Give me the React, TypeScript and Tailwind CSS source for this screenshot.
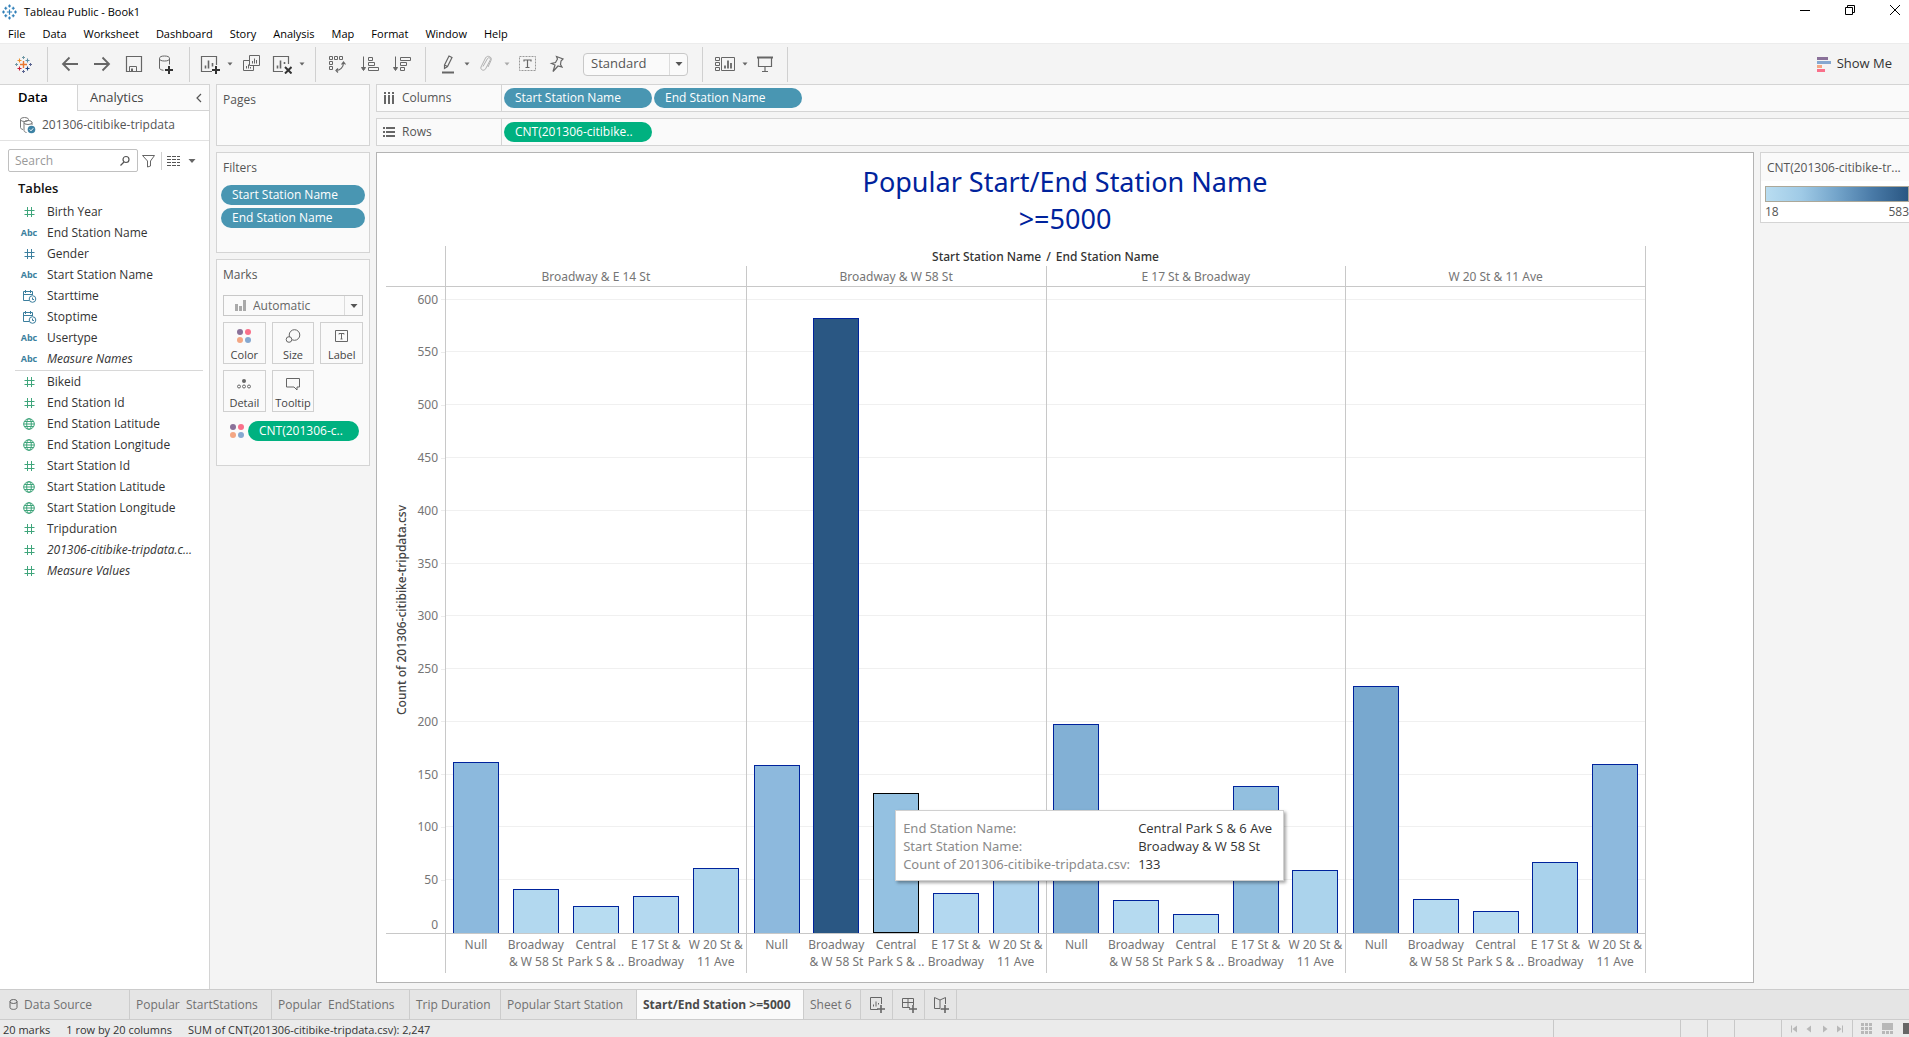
import React from 'react';

const UI = "font-['Open_Sans','Noto_Sans',sans-serif]";

/* ---------- data ---------- */

const MENUS = ['File', 'Data', 'Worksheet', 'Dashboard', 'Story', 'Analysis', 'Map', 'Format', 'Window', 'Help'];

type Kind = 'num' | 'abc' | 'date' | 'geo';
type Field = { name: string; kind: Kind; green?: boolean; italic?: boolean };

const DIMENSIONS: Field[] = [
  { name: 'Birth Year', kind: 'num', green: true },
  { name: 'End Station Name', kind: 'abc' },
  { name: 'Gender', kind: 'num' },
  { name: 'Start Station Name', kind: 'abc' },
  { name: 'Starttime', kind: 'date' },
  { name: 'Stoptime', kind: 'date' },
  { name: 'Usertype', kind: 'abc' },
  { name: 'Measure Names', kind: 'abc', italic: true },
];

const MEASURES: Field[] = [
  { name: 'Bikeid', kind: 'num', green: true },
  { name: 'End Station Id', kind: 'num', green: true },
  { name: 'End Station Latitude', kind: 'geo', green: true },
  { name: 'End Station Longitude', kind: 'geo', green: true },
  { name: 'Start Station Id', kind: 'num', green: true },
  { name: 'Start Station Latitude', kind: 'geo', green: true },
  { name: 'Start Station Longitude', kind: 'geo', green: true },
  { name: 'Tripduration', kind: 'num', green: true },
  { name: '201306-citibike-tripdata.c...', kind: 'num', green: true, italic: true },
  { name: 'Measure Values', kind: 'num', green: true, italic: true },
];

const END_STATIONS = [
  ['Null'],
  ['Broadway', '& W 58 St'],
  ['Central', 'Park S & ..'],
  ['E 17 St &', 'Broadway'],
  ['W 20 St &', '11 Ave'],
];

type Bar = { value: number; fill: string; hovered?: boolean };
const PANES: { name: string; bars: Bar[] }[] = [
  {
    name: 'Broadway & E 14 St',
    bars: [
      { value: 162, fill: '#8cb9dd' },
      { value: 42, fill: '#b2d8ef' },
      { value: 26, fill: '#b7dcf1' },
      { value: 35, fill: '#b4d9f0' },
      { value: 62, fill: '#abd3ec' },
    ],
  },
  {
    name: 'Broadway & W 58 St',
    bars: [
      { value: 159, fill: '#8db9dd' },
      { value: 583, fill: '#2a5783' },
      { value: 133, fill: '#94c1e1', hovered: true },
      { value: 38, fill: '#b3d8f0' },
      { value: 54, fill: '#aed4ee' },
    ],
  },
  {
    name: 'E 17 St & Broadway',
    bars: [
      { value: 198, fill: '#82b0d5' },
      { value: 31, fill: '#b5daf0' },
      { value: 18, fill: '#b9ddf1' },
      { value: 139, fill: '#92bfdf' },
      { value: 60, fill: '#abd3ec' },
    ],
  },
  {
    name: 'W 20 St & 11 Ave',
    bars: [
      { value: 234, fill: '#78a8cf' },
      { value: 32, fill: '#b5daf0' },
      { value: 21, fill: '#b8dcf1' },
      { value: 67, fill: '#a9d2ec' },
      { value: 160, fill: '#8db9dd' },
    ],
  },
];

const AXIS_MAX = 612;
const TICKS = [600, 550, 500, 450, 400, 350, 300, 250, 200, 150, 100, 50];
const pct = (v: number) => `${(v / AXIS_MAX) * 100}%`;

/* ---------- icons ---------- */

function Ico({ children, w = 20, label }: { children: React.ReactNode; w?: number; label?: string }) {
  return (
    <svg width={w} height="20" viewBox={`0 0 ${w} 20`} fill="none" stroke="#666" strokeWidth="1" aria-label={label} className="shrink-0">
      {children}
    </svg>
  );
}

function ToolButton({ label, children, w }: { label: string; children: React.ReactNode; w?: number }) {
  return (
    <button type="button" aria-label={label} className="flex shrink-0 items-center">
      <Ico w={w}>{children}</Ico>
    </button>
  );
}

function Caret({ className = 'fill-[#666]' }: { className?: string }) {
  return (
    <svg width="8" height="8" viewBox="0 0 8 8" className={`shrink-0 ${className}`}>
      <path d="M1.5 2.5h5L4 5.5z" />
    </svg>
  );
}

function MenuCaret({ label, dim }: { label: string; dim?: boolean }) {
  return (
    <button type="button" aria-label={label} className="flex items-center">
      <Caret className={dim ? 'fill-[#aaa]' : 'fill-[#666]'} />
    </button>
  );
}

const cross = (x: number, y: number, r: number) => `M${x - r} ${y}h${2 * r}M${x} ${y - r}v${2 * r}`;

function Logo() {
  return (
    <Ico label="Tableau">
      <path d={cross(9.5, 10.5, 3.5)} stroke="#e8762d" strokeWidth="1.4" />
      <path d={cross(5.5, 6.5, 2)} stroke="#eb912c" strokeWidth="1.1" />
      <path d={cross(13.5, 6.5, 2)} stroke="#5a8fa8" strokeWidth="1.1" />
      <path d={cross(5.5, 14.5, 2)} stroke="#c72037" strokeWidth="1.1" />
      <path d={cross(13.5, 14.5, 2)} stroke="#1f447e" strokeWidth="1.1" />
      <path d={cross(9.5, 3.5, 1.5) + cross(2.5, 10.5, 1.5)} stroke="#7199a6" />
      <path d={cross(16.5, 10.5, 1.5) + cross(9.5, 17.5, 1.5)} stroke="#5c6692" />
    </Ico>
  );
}

function TitleLogo() {
  return (
    <svg width="15" height="16" viewBox="0 0 20 20" fill="none" stroke="#2f7fb8" strokeWidth="1.6">
      <path d={cross(10, 10, 3.5) + cross(5, 5, 2) + cross(15, 5, 2) + cross(5, 15, 2) + cross(15, 15, 2)} />
      <path d={cross(10, 2, 2) + cross(2, 10, 2) + cross(18, 10, 2) + cross(10, 18, 2)} />
    </svg>
  );
}

function ColorDots() {
  return (
    <svg width="14" height="14" viewBox="0 0 14 14" className="shrink-0">
      <circle cx="3" cy="3" r="3" fill="#8a7199" />
      <circle cx="11" cy="3" r="3" fill="#f9708a" />
      <circle cx="3" cy="11" r="3" fill="#f3a683" />
      <circle cx="11" cy="11" r="3" fill="#85a8d0" />
    </svg>
  );
}

function FieldIcon({ kind, green }: { kind: Kind; green?: boolean }) {
  const color = green ? '#3fa57b' : '#3c7f9e';
  if (kind === 'abc') return <span className="text-[9px] font-bold text-[#3c7f9e]">Abc</span>;
  return (
    <svg width="16" height="14" viewBox="0 0 16 14" fill="none" stroke={color} strokeWidth="1">
      {kind === 'num' && <path d="M6.5 2v10M10.5 2v10M3.5 5.5h10M3.5 9.5h10" />}
      {kind === 'date' && (
        <>
          <path d="M8 11.5H2.500v-9h9V6M2.500 5.500h9M4.500 1v3M9.500 1v3" />
          <circle cx="11.500" cy="10" r="3.300" />
          <path d="M11.500 8.500V10.500h1.500" />
        </>
      )}
      {kind === 'geo' && (
        <>
          <circle cx="8" cy="7" r="5.300" />
          <ellipse cx="8" cy="7" rx="2.300" ry="5.300" />
          <path d="M3.500 4.500h9M3.500 9.500h9M2.500 7h11" />
        </>
      )}
    </svg>
  );
}

/* ---------- shared pieces ---------- */

function Pill({ children, green, className = '' }: { children: React.ReactNode; green?: boolean; className?: string }) {
  return (
    <button
      type="button"
      className={`flex h-5 items-center overflow-hidden rounded-full pl-[11px] text-left text-xs font-medium whitespace-nowrap text-white ${
        green ? 'bg-[#00b180]' : 'bg-[#4996b2]'
      } ${className}`}
    >
      {children}
    </button>
  );
}

function Combo({ label, value, className, selectClass }: { label: string; value: string; className: string; selectClass: string }) {
  return (
    <span className={`relative flex items-stretch border border-[#c8c8c8] bg-[#fafafa] ${className}`}>
      <select aria-label={label} defaultValue={value} className={`w-full appearance-none bg-transparent outline-none ${selectClass}`}>
        <option>{value}</option>
      </select>
      <span className="pointer-events-none absolute inset-y-0 right-0 flex w-[18px] items-center justify-center border-l border-[#dcdcdc]">
        <svg width="8" height="6" viewBox="0 0 8 6" fill="#555">
          <path d="M0.500 1h7L4 5z" />
        </svg>
      </span>
    </span>
  );
}

function Card({ title, className, children }: { title: string; className: string; children?: React.ReactNode }) {
  return (
    <section className={`border border-[#d4d4d4] bg-[#fafafa] ${className}`}>
      <h2 className="px-1.5 pt-[7px] text-xs leading-4 text-[#555]">{title}</h2>
      {children}
    </section>
  );
}

/* ---------- chrome ---------- */

function TitleBar() {
  return (
    <header className="bg-white text-[11px] text-black">
      <div className="flex h-6 items-center gap-[7px] pl-0.5">
        <TitleLogo />
        <span>Tableau Public - Book1</span>
        <div className="mb-1 ml-auto flex items-center gap-[33px] pr-2">
          <button type="button" aria-label="Minimize">
            <svg width="12" height="12" viewBox="0 0 12 12" stroke="#000"><path d="M1 6.500h10" /></svg>
          </button>
          <button type="button" aria-label="Restore">
            <svg width="12" height="12" viewBox="0 0 12 12" stroke="#000" fill="none"><path d="M1.500 3.500h7v7h-7zM3.500 3.500v-2h7v7h-2" /></svg>
          </button>
          <button type="button" aria-label="Close">
            <svg width="12" height="12" viewBox="0 0 12 12" stroke="#000"><path d="M1 1l10 10M11 1L1 11" /></svg>
          </button>
        </div>
      </div>
      <nav className="flex h-[19px] items-center gap-[17px] pt-0.5 pl-2">
        {MENUS.map((m) => (
          <button type="button" key={m}>{m}</button>
        ))}
      </nav>
    </header>
  );
}

const Sep = () => <span className="h-[35px] w-px shrink-0 bg-[#d0d0d0]" />;

function Toolbar() {
  return (
    <div className="flex h-[41px] shrink-0 items-center border-t border-[#ececec] bg-[#f4f4f4]">
      <div className="flex pr-[13px] pl-3.5"><Logo /></div>
      <Sep />
      <div className="flex gap-3 pr-[13px] pl-3">
        <ToolButton label="Undo"><path d="M3 10h15M9.500 3.500L3 10l6.500 6.500" strokeWidth="1.800" /></ToolButton>
        <ToolButton label="Redo"><path d="M2 10h15M10.500 3.500L17 10l-6.500 6.500" strokeWidth="1.800" /></ToolButton>
        <ToolButton label="Save">
          <path d="M2.500 2.500h15v15h-15z" strokeWidth="1.200" />
          <path d="M5.500 17v-4.500h7V17" />
          <path d="M8 14.500v2.500" strokeWidth="2" />
        </ToolButton>
        <ToolButton label="New Data Source">
          <ellipse cx="8.500" cy="4.500" rx="5" ry="2.500" />
          <path d="M3.500 4.500v9.500c0 1.200 1.500 2 4 2.300M13.500 4.500v6" />
          <path d="M13 12v8M9 16h8" strokeWidth="2" stroke="#333" />
        </ToolButton>
      </div>
      <Sep />
      <div className="flex items-center gap-[9px] pr-[9px] pl-2.5">
        <span className="flex items-center gap-1.5">
          <ToolButton label="New Worksheet">
            <path d="M12 17.500H1.500v-15h15V11" strokeWidth="1.200" />
            <path d="M5.500 14.500v-3M8.500 14.500v-8M12.500 12.500V9" strokeWidth="1.600" />
            <path d="M16 12v8M12 16h8" strokeWidth="2" stroke="#333" />
          </ToolButton>
          <MenuCaret label="New Worksheet options" />
        </span>
        <ToolButton label="Duplicate">
          <path d="M6.500 1.500h10v10h-10zM6 6.500H.5v10h10V12" />
          <path d="M9.500 9.500V7M11.500 9.500V4.500M13.500 9.500V6M3.500 14.500v-2.500M5.500 14.500v-4M7.500 14.500v-1.500" />
        </ToolButton>
        <span className="flex items-center gap-1.5">
          <ToolButton label="Clear Sheet">
            <path d="M11 17.500H1.500v-15h15V10" strokeWidth="1.200" />
            <path d="M5.500 14.500v-3M8.500 14.500v-8M12.500 10V8" strokeWidth="1.600" />
            <path d="M13 13l6.500 6.500M19.500 13L13 19.500" strokeWidth="2" stroke="#333" />
          </ToolButton>
          <MenuCaret label="Clear Sheet options" />
        </span>
      </div>
      <Sep />
      <div className="flex gap-3 pr-[13px] pl-3">
        <ToolButton label="Swap Rows and Columns">
          <path d="M1.500 2.500h3v3h-3zM6.500 2.500h3v3h-3zM11.500 2.500h3v3h-3zM1.500 7.500h3v3h-3zM1.500 12.500h3v3h-3z" />
          <path d="M8 16.500c4 0 7.500-3 7.500-8M13.500 10.500l2-2.500 2 2.500M10 14.500l-2 2 2 2" strokeWidth="1.200" />
        </ToolButton>
        <ToolButton label="Sort Ascending">
          <path d="M3.500 2.500v13M1.500 13.500h4l-2 3z" fill="#666" />
          <path d="M8.500 3.500h4v3h-4zM8.500 8.500h6v3h-6zM8.500 13.500h10v3h-10z" />
        </ToolButton>
        <ToolButton label="Sort Descending">
          <path d="M3.500 2.500v13M1.500 13.500h4l-2 3z" fill="#666" />
          <path d="M8.500 3.500h10v3h-10zM8.500 8.500h6v3h-6zM8.500 13.500h4v3h-4z" />
        </ToolButton>
      </div>
      <Sep />
      <div className="flex items-center gap-2 pr-3.5 pl-[13px]">
        <span className="flex items-center gap-1">
          <ToolButton label="Highlight">
            <path d="M5.500 11l4.500-9 3 1.500L8.500 12.500l-3 2zM5.500 11l3 1.500" strokeWidth="1.200" />
            <path d="M3 18.500h12" strokeWidth="2" />
          </ToolButton>
          <MenuCaret label="Highlight options" />
        </span>
        <span className="flex items-center gap-1">
          <ToolButton label="Group Members">
            <path d="M4 12.500l4.500-8c1.200-1.600 3.500-.5 2.800 1.400L6.500 15c-1.600 2.500-5.500.8-4.500-2L6.500 4c1.800-3.300 7-1.400 5.500 2.500L9 13" stroke="#b0b0b0" />
          </ToolButton>
          <MenuCaret label="Group options" dim />
        </span>
        <ToolButton label="Show Mark Labels">
          <path d="M.5 2.500h16v14H.5z" stroke="#999" strokeDasharray="2 1" />
          <path d="M5 7.500V6h7v1.500M8.500 6v8M6.500 13.500h4" strokeWidth="1.200" />
        </ToolButton>
        <ToolButton label="Fix Axes">
          <path d="M9.500 2.500l6.500 2.500-2 2-.5 3.500 1.500 2.500-4-1-5 5.500 2-6.500-3.500-1.500 4-1 2-3.500z" strokeWidth="1.200" />
        </ToolButton>
        <Combo label="Fit" value="Standard" className="ml-2 h-[23px] w-[105px] rounded-sm" selectClass="pl-[7px] text-[13px] text-[#555]" />
      </div>
      <Sep />
      <div className="flex items-center gap-2 pr-2.5 pl-3">
        <span className="flex items-center gap-1">
          <ToolButton label="Show Cards" w={22}>
            <path d="M.5 3.500h4v3h-4zM.5 8.500h4v3h-4zM.5 13.500h4v3h-4zM6.500 3.500h13v13h-13z" />
            <path d="M10 14.500v-3M13 14.500v-8M16 14.500V9" strokeWidth="1.800" />
          </ToolButton>
          <MenuCaret label="Show Cards options" />
        </span>
        <ToolButton label="Presentation Mode">
          <path d="M0 3.500h16" strokeWidth="2" />
          <path d="M1.500 4v8.500h13V4M8 12.500v5M5 17.500h6" strokeWidth="1.200" />
        </ToolButton>
      </div>
      <Sep />
      <button type="button" className="ml-auto flex items-center gap-1.5 pr-[17px] text-[13px] text-[#333]">
        <svg width="14" height="15" viewBox="0 0 14 15">
          <path d="M0 0h11v3H0z" fill="#8a7199" />
          <path d="M0 4h14v3H0z" fill="#85a8d0" />
          <path d="M0 8h5v3H0z" fill="#f3a683" />
          <path d="M0 12h8v3H0z" fill="#f9708a" />
        </svg>
        Show Me
      </button>
    </div>
  );
}

/* ---------- data pane ---------- */

function FieldList({ fields }: { fields: Field[] }) {
  return (
    <ul>
      {fields.map((f) => (
        <li key={f.name} className="flex h-[21px] items-center gap-1">
          <span className="flex w-7 shrink-0 justify-center"><FieldIcon kind={f.kind} green={f.green} /></span>
          <span className={`whitespace-nowrap text-[#333] ${f.italic ? 'italic' : ''}`}>{f.name}</span>
        </li>
      ))}
    </ul>
  );
}

function DataPane() {
  return (
    <aside className="w-[210px] shrink-0 border-t border-r border-[#d4d4d4] bg-white text-xs">
      <div className="flex h-[26px] text-[13px]">
        <button type="button" className="w-[77px] pl-[18px] text-left font-semibold text-black">Data</button>
        <div className="flex flex-1 items-center justify-between border-b border-l border-[#d4d4d4] bg-[#fafafa] pr-[7px] pl-3">
          <button type="button" className="text-[#444]">Analytics</button>
          <button type="button" aria-label="Collapse pane">
            <svg width="6" height="10" viewBox="0 0 6 10" fill="none" stroke="#555" strokeWidth="1.200"><path d="M5 1L1 5l4 4" /></svg>
          </button>
        </div>
      </div>
      <button type="button" className="flex h-[30px] w-full items-center gap-1.5 border-b border-[#e2e2e2] pb-0.5 pl-[19px] text-[#555]">
        <svg width="17" height="18" viewBox="0 0 17 18" fill="none" stroke="#777">
          <ellipse cx="5.500" cy="3.500" rx="4" ry="2" />
          <path d="M1.500 3.500v8c0 1 1 1.700 2.500 2" />
          <ellipse cx="9" cy="6.500" rx="4" ry="2" />
          <path d="M5 6.500v8c0 1 1 1.700 2.500 2M13 6.500V9" />
          <circle cx="12.500" cy="13.500" r="3.800" fill="#3d82a4" stroke="none" />
          <path d="M10.800 13.500l1.200 1.300 2.200-2.500" stroke="#fff" />
        </svg>
        201306-citibike-tripdata
      </button>
      <div className="flex h-[39px] items-center pl-2">
        <label className="flex h-[23px] w-[130px] items-center rounded-xs border border-[#c0c0c0] pr-1.5 pl-1.5">
          <input type="text" placeholder="Search" aria-label="Search" className="w-full min-w-0 outline-none placeholder:text-[#999]" />
          <svg width="12" height="12" viewBox="0 0 12 12" fill="none" stroke="#555" strokeWidth="1.200" className="shrink-0">
            <circle cx="7" cy="4.500" r="3" />
            <path d="M5 7L1.500 10.500" />
          </svg>
        </label>
        <button type="button" aria-label="Filter fields" className="ml-[3px]">
          <svg width="15" height="14" viewBox="0 0 15 14" fill="none" stroke="#666"><path d="M1.500 1.500h12L9.500 7v5l-3 1V7z" /></svg>
        </button>
        <span className="mx-[5px] h-[18px] w-px bg-[#d0d0d0]" />
        <button type="button" aria-label="View options" className="flex items-center gap-2">
          <svg width="13" height="10" viewBox="0 0 13 10" stroke="#555" strokeWidth="1">
            <path d="M0 .5h13M0 3.500h13M0 6.500h13M0 9.500h13" strokeDasharray="4 1" />
          </svg>
          <svg width="8" height="6" viewBox="0 0 8 6" fill="#666"><path d="M.5 1h7L4 5z" /></svg>
        </button>
      </div>
      <h2 className="mb-[3px] flex h-[17px] items-center pl-[18px] text-[13px] font-semibold text-[#111]">Tables</h2>
      <div className="mr-1.5 ml-[15px] pt-px">
        <FieldList fields={DIMENSIONS} />
        <div className="mt-px border-t border-[#d8d8d8]"><FieldList fields={MEASURES} /></div>
      </div>
    </aside>
  );
}

/* ---------- cards ---------- */

function MarkButton({ label, children }: { label: string; children: React.ReactNode }) {
  return (
    <button type="button" className="flex h-[42px] flex-col items-center justify-between border border-[#d0d0d0] pt-1 text-[11px] leading-4 text-[#444]">
      <Ico>{children}</Ico>
      {label}
    </button>
  );
}

function Cards() {
  return (
    <div className="flex w-[154px] shrink-0 flex-col gap-1.5">
      <Card title="Pages" className="h-[62px]" />
      <Card title="Filters" className="h-[101px]">
        <div className="flex flex-col gap-[3px] px-1 pt-[9px]">
          <Pill>Start Station Name</Pill>
          <Pill>End Station Name</Pill>
        </div>
      </Card>
      <Card title="Marks" className="h-[207px]">
        <div className="px-1.5 pt-3">
          <div className="flex">
            <Combo label="Mark type" value="Automatic" className="h-[21px] w-full" selectClass="pl-[29px] text-xs text-[#666]" />
            <svg width="11" height="11" viewBox="0 0 11 11" fill="#aaa" className="pointer-events-none absolute mt-[5px] ml-3">
              <path d="M0 4h3v7H0zM4 6h3v5H4zM8 0h3v11H8z" />
            </svg>
          </div>
          <div className="mt-1.5 grid grid-cols-3 gap-1.5">
            <button type="button" className="flex h-[42px] flex-col items-center justify-between border border-[#d0d0d0] pt-1.5 text-[11px] leading-4 text-[#444]">
              <ColorDots />
              Color
            </button>
            <MarkButton label="Size">
              <circle cx="11.500" cy="8" r="5.300" />
              <circle cx="6" cy="12.500" r="2.800" fill="#fafafa" />
            </MarkButton>
            <MarkButton label="Label">
              <path d="M3.500 3.500h12v11h-12zM7 7.500v-1h5v1M9.500 6.500V12M8.500 12h2" />
            </MarkButton>
            <MarkButton label="Detail">
              <circle cx="10" cy="6" r="2" fill="#666" stroke="none" />
              <circle cx="5" cy="11.500" r="1.500" />
              <circle cx="10" cy="11.500" r="1.500" />
              <circle cx="15" cy="11.500" r="1.500" />
            </MarkButton>
            <MarkButton label="Tooltip">
              <path d="M3.500 3.500h13v8.500h-2.500v3l-3-3h-7.500z" />
            </MarkButton>
          </div>
          <div className="flex items-center gap-1 pt-[9px] pr-1 pl-[7px]">
            <ColorDots />
            <Pill green className="flex-1">CNT(201306-c..</Pill>
          </div>
        </div>
      </Card>
    </div>
  );
}

/* ---------- shelves ---------- */

function Shelf({ title, icon, children }: { title: string; icon: React.ReactNode; children: React.ReactNode }) {
  return (
    <div className="flex h-7 shrink-0 border border-r-0 border-[#d4d4d4] bg-[#fafafa]">
      <div className="flex w-[125px] items-center gap-[7px] border-r border-[#d4d4d4] pl-1.5 text-xs text-[#555]">
        {icon}
        {title}
      </div>
      <div className="flex items-center gap-0.5 pl-0.5">{children}</div>
    </div>
  );
}

/* ---------- chart ---------- */

function MarkTooltip() {
  return (
    <dl className="absolute bottom-[51px] left-[21px] z-10 grid w-[389px] grid-cols-[235px_1fr] border border-[#d0d0d0] bg-white pt-2 pb-[7px] pl-[7px] text-left text-[13px] leading-[18px] whitespace-nowrap shadow-[2px_2px_3px_rgba(0,0,0,0.35)]">
      <dt className="text-[#8a8a8a]">End Station Name:</dt>
      <dd className="font-['Open_Sans','Noto_Sans',sans-serif] font-medium text-[#333]">Central Park S &amp; 6 Ave</dd>
      <dt className="text-[#8a8a8a]">Start Station Name:</dt>
      <dd className="font-['Open_Sans','Noto_Sans',sans-serif] font-medium text-[#333]">Broadway &amp; W 58 St</dd>
      <dt className="text-[#8a8a8a]">Count of 201306-citibike-tripdata.csv:</dt>
      <dd className="font-['Open_Sans','Noto_Sans',sans-serif] font-medium text-[#333]">133</dd>
    </dl>
  );
}

function Chart() {
  return (
    <div className="mr-[107px] mb-[9px] ml-[9px] flex min-h-0 flex-1 text-xs text-[#757575]">
      {/* value axis */}
      <div className="flex w-[59px] shrink-0 flex-col">
        <div className="h-[41px] border-b border-[#c8c8c8]" />
        <div className="relative flex flex-1 border-b border-[#c8c8c8]">
          <div className="flex w-8 items-center justify-center">
            <span className="rotate-180 font-medium whitespace-nowrap text-[#444] [writing-mode:vertical-rl]">Count of 201306-citibike-tripdata.csv</span>
          </div>
          {TICKS.map((t) => (
            <span key={t} className="absolute right-0 flex h-4 translate-y-1/2 items-center gap-[3px]" style={{ bottom: pct(t) }}>
              {t}
              <span className="h-px w-1 bg-[#ececec]" />
            </span>
          ))}
          <span className="absolute right-[7px] bottom-0 leading-4">0</span>
        </div>
        <div className="h-[39px]" />
      </div>

      {/* panes */}
      <div className="flex min-w-0 flex-1 flex-col border-x border-[#c8c8c8]">
        <div className="flex h-5 items-center justify-center gap-[5px] pt-0.5 font-medium text-[#333]">
          <span>Start Station Name</span>
          <span>/</span>
          <span>End Station Name</span>
        </div>
        <div className="grid flex-1 grid-cols-4">
          {PANES.map((pane, i) => (
            <div key={pane.name} className={`flex flex-col ${i ? 'border-l border-[#c8c8c8]' : ''}`}>
              <div className="flex h-[21px] items-center justify-center border-b border-[#c8c8c8] pt-0.5">{pane.name}</div>
              <div className="relative grid flex-1 grid-cols-5 border-b border-[#c8c8c8]">
                {TICKS.map((t) => (
                  <span key={t} className="absolute inset-x-0 h-px bg-[#f0f0f0]" style={{ bottom: pct(t) }} />
                ))}
                {pane.bars.map((b, j) => (
                  <div key={j} className="flex items-end justify-center">
                    <div
                      className={`relative w-[46px] border ${b.hovered ? 'border-black' : 'border-b-0 border-[#00239c]'}`}
                      style={{ height: pct(b.value), backgroundColor: b.fill }}
                    >
                      {b.hovered && <MarkTooltip />}
                    </div>
                  </div>
                ))}
              </div>
              <div className="grid h-[39px] grid-cols-5 leading-[17px]">
                {END_STATIONS.map((lines, j) => (
                  <div key={j} className="flex flex-col items-center pt-0.5 whitespace-nowrap">
                    {lines.map((l) => (
                      <span key={l}>{l}</span>
                    ))}
                  </div>
                ))}
              </div>
            </div>
          ))}
        </div>
      </div>
    </div>
  );
}

function Legend() {
  return (
    <aside className="flex w-[149px] shrink-0 flex-col self-start border border-r-0 border-[#d4d4d4] bg-white text-xs text-[#555]">
      <h2 className="h-7 truncate bg-[#fafafa] pl-1.5 leading-[30px] whitespace-nowrap">CNT(201306-citibike-tr...</h2>
      <div className="pt-[5px] pl-1">
        <div className="h-4 border border-[#aca899] bg-[linear-gradient(to_right,#b9ddf1,#9fcae6,#73a4ca,#497aa7,#2a5783)]" />
        <div className="flex justify-between pt-0.5 pb-0.5 leading-4">
          <span>18</span>
          <span>583</span>
        </div>
      </div>
    </aside>
  );
}

/* ---------- bottom ---------- */

const SHEETS = [
  { name: 'Popular  StartStations', w: 'w-[142px]' },
  { name: 'Popular  EndStations', w: 'w-[138px]' },
  { name: 'Trip Duration', w: 'w-[91px]' },
  { name: 'Popular Start Station', w: 'w-[136px]' },
  { name: 'Start/End Station >=5000', w: 'w-[167px]', active: true },
  { name: 'Sheet 6', w: 'w-[57px]' },
];

function SheetTabs() {
  return (
    <nav className="flex h-[31px] shrink-0 border-y border-[#cccccc] bg-[#e5e5e5] text-xs text-[#707070]">
      <button type="button" className="flex w-[130px] items-center gap-1.5 border-r border-[#cccccc] pl-[9px]">
        <svg width="9" height="11" viewBox="0 0 9 11" fill="none" stroke="#666">
          <ellipse cx="4.500" cy="2.500" rx="3.500" ry="2" />
          <path d="M1 2.500v6c0 2.500 7 2.500 7 0v-6" />
        </svg>
        Data Source
      </button>
      {SHEETS.map((s) => (
        <button
          type="button"
          key={s.name}
          className={`border-r border-[#cccccc] pl-1.5 text-left whitespace-pre ${s.w} ${
            s.active ? 'bg-[#fafafa] font-bold text-[#4a4a4a]' : ''
          }`}
        >
          {s.name}
        </button>
      ))}
      <button type="button" aria-label="New worksheet" className="w-8 border-r border-[#cccccc] pl-2">
        <Ico>
          <path d="M9 14.500H1.500v-12h11V9M4.500 11.500v-2M7 11.500v-5M9.500 9.500V8" />
          <path d="M12 10v8M8 14h8" strokeWidth="1.600" />
        </Ico>
      </button>
      <button type="button" aria-label="New dashboard" className="w-8 border-r border-[#cccccc] pl-2">
        <Ico>
          <path d="M9 12.500H1.500v-9h11V10M7 3.500v9M1.500 7.500h11" />
          <path d="M12 10v8M8 14h8" strokeWidth="1.600" />
        </Ico>
      </button>
      <button type="button" aria-label="New story" className="w-8 border-r border-[#cccccc] pl-2">
        <Ico>
          <path d="M8 14.500l-1-1H1.500v-11L7 5l5.500-2.500V9M7 5v8.500" />
          <path d="M12 10v8M8 14h8" strokeWidth="1.600" />
        </Ico>
      </button>
    </nav>
  );
}

function NavButton({ label, d }: { label: string; d: string }) {
  return (
    <button type="button" aria-label={label}>
      <svg width="8" height="8" viewBox="0 0 8 8" fill="#b8b8b8"><path d={d} /></svg>
    </button>
  );
}

const Divider = ({ className }: { className: string }) => <span className={`h-full border-l border-[#c8c8c8] ${className}`} />;

function StatusBar() {
  return (
    <footer className="flex h-[17px] shrink-0 items-center overflow-hidden bg-[#ebebeb] text-[11px] whitespace-nowrap text-[#333]">
      <div className="flex gap-4 pt-1 pl-[3px]">
        <span>20 marks</span>
        <span>1 row by 20 columns</span>
        <span>SUM of CNT(201306-citibike-tripdata.csv): 2,247</span>
      </div>
      <div className="ml-auto flex h-full items-center">
        <Divider className="w-[127px]" />
        <Divider className="w-[27px]" />
        <Divider className="w-[27px]" />
        <Divider className="w-[47px]" />
        <div className="flex h-full w-[71px] items-center justify-between border-l border-[#c8c8c8] px-2">
          <NavButton label="First sheet" d="M1 0.500h1v7H1zM7 .5v7L2.500 4z" />
          <NavButton label="Previous sheet" d="M6 .5v7L1.500 4z" />
          <NavButton label="Next sheet" d="M2 .5v7L6.500 4z" />
          <NavButton label="Last sheet" d="M6 .5h1v7H6zM1 .5v7L5.500 4z" />
        </div>
        <div className="flex h-full items-center gap-2.5 border-l border-[#c8c8c8] pl-2">
          <button type="button" aria-label="Sheet sorter">
            <svg width="11" height="11" viewBox="0 0 11 11" fill="#b8b8b8"><path d="M0 0h3v3H0zM4 0h3v3H4zM8 0h3v3H8zM0 4h3v3H0zM4 4h3v3H4zM8 4h3v3H8zM0 8h3v3H0zM4 8h3v3H4zM8 8h3v3H8z" /></svg>
          </button>
          <button type="button" aria-label="Filmstrip">
            <svg width="11" height="11" viewBox="0 0 11 11" fill="#b8b8b8"><path d="M0 0h11v7H0zM0 8h3v3H0zM4 8h3v3H4zM8 8h3v3H8z" /></svg>
          </button>
          <button type="button" aria-label="Tabs view">
            <svg width="6" height="11" viewBox="0 0 6 11" fill="#666"><path d="M0 0h6v11H0z" /></svg>
          </button>
        </div>
      </div>
    </footer>
  );
}

export default function App() {
  return (
    <div className={`flex h-screen flex-col overflow-hidden bg-[#f4f4f4] ${UI}`}>
      <TitleBar />
      <Toolbar />
      <div className="flex min-h-0 flex-1 gap-1.5">
        <DataPane />
        <Cards />
        <main className="flex min-w-0 flex-1 flex-col gap-1.5 pb-1.5">
          <Shelf
            title="Columns"
            icon={
              <svg width="12" height="12" viewBox="0 0 12 12" fill="#666"><path d="M1 0h2v2H1zM1 3h2v9H1zM5 0h2v2H5zM5 3h2v9H5zM9 0h2v2H9zM9 3h2v9H9z" /></svg>
            }
          >
            <Pill className="w-[148px]">Start Station Name</Pill>
            <Pill className="w-[148px]">End Station Name</Pill>
          </Shelf>
          <Shelf
            title="Rows"
            icon={
              <svg width="12" height="11" viewBox="0 0 12 11" fill="#666"><path d="M0 0h2v2H0zM3 0h9v2H3zM0 4h2v2H0zM3 4h9v2H3zM0 8h2v2H0zM3 8h9v2H3z" /></svg>
            }
          >
            <Pill green className="w-[148px]">CNT(201306-citibike..</Pill>
          </Shelf>
          <div className="flex min-h-0 flex-1 gap-1.5">
            <section className="flex min-w-0 flex-1 flex-col border border-[#b4b4b4] bg-white font-['Noto_Sans',sans-serif]">
              <h1 className="pt-2.5 pb-[9px] text-center text-[27px] leading-[37px] text-[#00239c]">
                Popular Start/End Station Name
                <br />
                &gt;=5000
              </h1>
              <Chart />
            </section>
            <Legend />
          </div>
        </main>
      </div>
      <SheetTabs />
      <StatusBar />
    </div>
  );
}
